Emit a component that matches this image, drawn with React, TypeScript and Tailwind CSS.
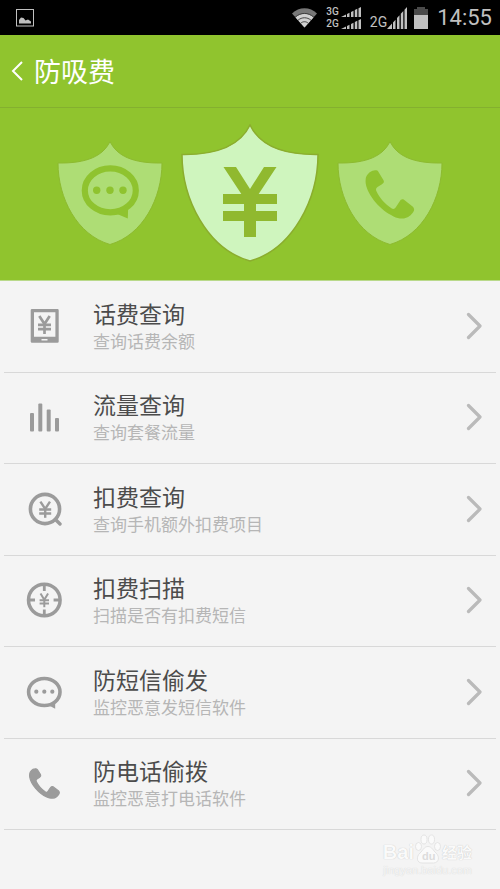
import type { ReactNode } from "react";

type Item = {
  title: string;
  desc: string;
  icon: ReactNode;
};

const PHONE_PATH =
  "M27.7 38 C28 34 32 30 36 29.5 C38 29.2 39.2 29.2 40.2 30.5 L45.4 39 C46.6 41 45.6 42 44 43.2 L39.5 46 C37.8 47.2 37.6 48.6 38.6 50.6 C41.6 57 47 63 53.4 67.2 C55.2 68.4 56.6 68 57.8 66.2 L61.6 60.4 C62.8 58.4 64.2 57.9 66 58.8 L74.6 65.4 C76.4 67 76.6 69 75.4 70.8 C73.4 74 70 77 66 77.4 C62 77.8 59 77 55.6 75.4 C42.6 69.6 29.6 54.6 27.7 42.6 C27.5 41 27.5 39.6 27.7 38 Z";

const SMALL_SHIELD =
  "M52 0.5 C59 15 75 22.5 104 22 C104 57 85 94 52 103.5 C19 94 0 57 0 22 C29 22.5 45 15 52 0.5 Z";

function Yen({ x, y, w, h, stroke }: { x: number; y: number; w: number; h: number; stroke: number }) {
  const cx = x + w / 2;
  const mid = y + h * 0.45;
  return (
    <g fill="none" stroke="currentColor" strokeWidth={stroke}>
      <path d={`M${x + w * 0.1} ${y} L${cx} ${mid} L${x + w * 0.9} ${y}`} />
      <path d={`M${x} ${y + h * 0.49} H${x + w} M${x} ${y + h * 0.73} H${x + w}`} />
      <path d={`M${cx} ${mid} V${y + h}`} />
    </g>
  );
}

function RowIcon({ children }: { children: ReactNode }) {
  return (
    <svg viewBox="0 0 36 36" className="h-9 w-9 shrink-0 text-[#9b9b9b]" fill="currentColor" aria-hidden="true">
      {children}
    </svg>
  );
}

const items: Item[] = [
  {
    title: "话费查询",
    desc: "查询话费余额",
    icon: (
      <RowIcon>
        <path
          fillRule="evenodd"
          d="M6 1 H31.5 Q32.7 1 32.7 2.2 V33.5 Q32.7 34.7 31.5 34.7 H6 Q4.7 34.7 4.7 33.5 V2.2 Q4.7 1 6 1 Z M8 4.3 V28.8 H29.4 V4.3 Z M15.5 31 V32.6 H21.5 V31 Z"
        />
        <Yen x={12} y={8} w={13} h={18} stroke={2.7} />
      </RowIcon>
    ),
  },
  {
    title: "流量查询",
    desc: "查询套餐流量",
    icon: (
      <RowIcon>
        <rect x="4" y="14" width="4" height="18.5" rx="1" />
        <rect x="12.3" y="4.6" width="4" height="27.9" rx="1" />
        <rect x="20.7" y="10.6" width="4" height="21.9" rx="1" />
        <rect x="29" y="19" width="4" height="13.5" rx="1" />
      </RowIcon>
    ),
  },
  {
    title: "扣费查询",
    desc: "查询手机额外扣费项目",
    icon: (
      <RowIcon>
        <circle cx="19" cy="18" r="14.6" fill="none" stroke="currentColor" strokeWidth="3.6" />
        <path d="M29.5 28.5 L34 33" stroke="currentColor" strokeWidth="3.4" strokeLinecap="round" />
        <Yen x={13.2} y={10.6} w={12} h={16.2} stroke={2.4} />
      </RowIcon>
    ),
  },
  {
    title: "扣费扫描",
    desc: "扫描是否有扣费短信",
    icon: (
      <RowIcon>
        <circle cx="18.3" cy="18" r="15.8" fill="none" stroke="currentColor" strokeWidth="3.5" />
        <path
          d="M18.3 2 V9 M18.3 27.5 V34 M2.3 18 H9 M27.6 18 H34.3"
          stroke="currentColor"
          strokeWidth="2.8"
        />
        <Yen x={13.6} y={11.6} w={9.4} h={13.6} stroke={2} />
      </RowIcon>
    ),
  },
  {
    title: "防短信偷发",
    desc: "监控恶意发短信软件",
    icon: (
      <RowIcon>
        <ellipse cx="18.3" cy="18" rx="15.7" ry="13.5" fill="none" stroke="currentColor" strokeWidth="3.6" />
        <path d="M23 31.5 L29.2 34.8 L29.2 28.5 Z" />
        <circle cx="10.3" cy="17.7" r="2.1" />
        <circle cx="18.3" cy="17.7" r="2.1" />
        <circle cx="26.3" cy="17.7" r="2.1" />
      </RowIcon>
    ),
  },
  {
    title: "防电话偷拨",
    desc: "监控恶意打电话软件",
    icon: (
      <RowIcon>
        <g transform="translate(-13.2 -14.1) scale(0.61)">
          <path d={PHONE_PATH} stroke="currentColor" strokeWidth="2" strokeLinejoin="round" />
        </g>
      </RowIcon>
    ),
  },
];

function SignalBars({ className }: { className: string }) {
  return (
    <svg viewBox="0 0 20 20" preserveAspectRatio="none" className={className} fill="currentColor" aria-hidden="true">
      <path d="M0 20 L5 15 V20 Z M6 14 L8.5 11.5 V20 H6 Z M10 10 L12.5 7.5 V20 H10 Z M13.8 6.2 L16.3 3.7 V20 H13.8 Z M17.5 2.5 L20 0 V20 H17.5 Z" />
    </svg>
  );
}

function StatusBar() {
  return (
    <div className="flex h-[35px] items-center bg-black pr-2 pl-4 font-[Roboto,sans-serif] text-[#c0c0c0]">
      <svg viewBox="0 0 18 18" className="h-[18px] w-[18px]" aria-hidden="true">
        <rect x="0.5" y="0.5" width="17" height="16.5" fill="none" stroke="currentColor" />
        <path d="M3 14.5 V11 L5 8.5 L7.5 9 L9.5 11.5 L12 10.5 L15 12.5 V14.5 Z" fill="currentColor" />
      </svg>

      <div className="ml-auto flex items-center">
        <svg viewBox="0 0 25 20" className="h-5 w-[25px]" aria-hidden="true">
          <path d="M12.5 19.5 L0 5.5 C7 -1.5 18 -1.5 25 5.5 Z" fill="#777" />
          <path d="M12.5 19.5 L3.5 9.5 C8.5 4.5 16.5 4.5 21.5 9.5 Z" fill="#d0d0d0" />
          <path
            d="M3.2 9.2 C8.5 4.2 16.5 4.2 21.8 9.2 M6 12.3 C9.8 8.9 15.2 8.9 19 12.3 M8.6 15.3 C11 13.2 14 13.2 16.4 15.3"
            fill="none"
            stroke="#333"
            strokeWidth="0.9"
          />
        </svg>
        <div className="ml-[9px] flex flex-col gap-[2px] text-[10px] leading-[10px] font-medium">
          <div className="flex items-center gap-[2px]">
            <span>3G</span>
            <SignalBars className="h-[10px] w-5" />
          </div>
          <div className="flex items-center gap-[2px]">
            <span>2G</span>
            <SignalBars className="h-[10px] w-5" />
          </div>
        </div>
        <div className="ml-[9px] flex items-end">
          <span className="text-[14px] leading-[14px]">2G</span>
          <SignalBars className="h-[22px] w-5" />
        </div>
        <svg viewBox="0 0 16 22" className="ml-[6px] h-[22px] w-4" aria-hidden="true">
          <path d="M4 0 H12 V2 H15 V8 H1 V2 H4 Z" fill="#4a4a4a" />
          <path d="M1 8 H15 V22 H1 Z" fill="currentColor" />
        </svg>
        <time className="ml-[8px] text-[22px] leading-[26px]">14:55</time>
      </div>
    </div>
  );
}

function Hero() {
  return (
    <section className="flex items-center justify-center gap-[18px] border-b border-[#b9d98a] bg-[#90c42e] pt-[16px] pb-[18px]">
      <svg viewBox="-1 -1 106 106" className="h-[106px] w-[106px]" aria-hidden="true">
        <path d={SMALL_SHIELD} fill="#aedd75" stroke="#8dba30" strokeWidth="1" />
        <g fill="#8fc32f">
          <ellipse cx="52.3" cy="49.4" rx="25.5" ry="22" fill="none" stroke="#8fc32f" strokeWidth="6.2" />
          <path d="M58 72.5 L69.8 77.5 L70.2 65 Z" />
          <circle cx="38.7" cy="49.2" r="3.7" />
          <circle cx="52" cy="49.2" r="3.7" />
          <circle cx="65" cy="49.2" r="3.7" />
        </g>
      </svg>

      <svg viewBox="-1 -1 138 138" className="h-[138px] w-[138px] text-[#90b92f]" aria-hidden="true">
        <path
          d="M68 0 C77 19 97 30 136 29.5 C136 74 111 124 68 136 C25 124 0 74 0 29.5 C39 30 59 19 68 0 Z"
          fill="#cff5be"
          stroke="#8bad2e"
          strokeWidth="1.5"
        />
        <g fill="currentColor">
          <path d="M41.5 42 H54 L68 64 L82 42 H94.5 L76 70 H60 Z" />
          <rect x="41" y="69" width="54" height="10" />
          <rect x="41" y="86" width="54" height="10" />
          <rect x="62" y="69" width="12" height="43" />
        </g>
      </svg>

      <svg viewBox="-1 -1 106 106" className="h-[106px] w-[106px]" aria-hidden="true">
        <path d={SMALL_SHIELD} fill="#aedd75" stroke="#8dba30" strokeWidth="1" />
        <path d={PHONE_PATH} fill="#8fc32f" />
      </svg>
    </section>
  );
}

function Watermark() {
  return (
    <div className="flex flex-col items-end pt-1 pr-[28px] text-[#fafafa] [text-shadow:0_0_1px_#bbb]">
      <div className="flex items-end">
        <span className="font-[Liberation_Sans,sans-serif] text-[20px] leading-[24px] font-bold">Bai</span>
        <svg viewBox="0 0 28 30" className="h-[30px] w-7" fill="#fafafa" stroke="#dedede" strokeWidth="0.8" aria-hidden="true">
          <ellipse cx="4.5" cy="12.5" rx="3" ry="4" />
          <ellipse cx="10" cy="5.5" rx="3" ry="4.5" />
          <ellipse cx="17.5" cy="5.5" rx="3" ry="4.5" />
          <ellipse cx="23.5" cy="12.5" rx="3" ry="4" />
          <path d="M14 12.5 C18 12.5 19 16.5 22 19 C26 22.5 25 29 19.5 29 H8 C2.5 29 2 22.5 6 19 C9 16.5 10 12.5 14 12.5 Z" />
          <text
            x="8"
            y="26"
            className="font-[Liberation_Sans,sans-serif] text-[11px] font-bold [text-shadow:none]"
            fill="#dcdcdc"
            stroke="none"
          >
            du
          </text>
        </svg>
        <span className="text-[15px] leading-[24px] font-bold">经验</span>
      </div>
      <span className="font-[Liberation_Sans,sans-serif] text-[11px] leading-[12px] text-[#f6f6f6] [text-shadow:0_0_1px_#ccc]">
        jingyan.baidu.com
      </span>
    </div>
  );
}

export default function App() {
  return (
    <div className="min-h-screen bg-[#f4f4f4] font-[Noto_Sans_CJK_SC,sans-serif]">
      <StatusBar />

      <header className="flex h-[73px] items-center border-b border-[#84b02f] bg-[#90c42e] pl-[11px] text-white">
        <button type="button" className="flex items-center gap-[11px]">
          <svg viewBox="0 0 12 20" className="h-5 w-3" fill="none" stroke="currentColor" strokeWidth="2" aria-hidden="true">
            <path d="M11 1 L2 10 L11 19" />
          </svg>
          <h1 className="text-[27px] leading-[36px]">防吸费</h1>
        </button>
      </header>

      <Hero />

      <ul className="grid min-h-[549px] auto-rows-fr px-1">
        {items.map((item) => (
          <li key={item.title} className="border-b border-[#d8d8d8]">
            <a href="#" className="flex h-full items-center pr-[14px] pb-px pl-[22px]">
              {item.icon}
              <div className="ml-[31px] flex-1">
                <div className="text-[23px] leading-[30px] text-[#4c4c4c]">{item.title}</div>
                <div className="text-[17px] leading-[26px] text-[#b6b6b6]">{item.desc}</div>
              </div>
              <svg
                viewBox="0 0 16 28"
                className="h-7 w-4"
                fill="none"
                stroke="#bababa"
                strokeWidth="3.2"
                strokeLinecap="round"
                strokeLinejoin="round"
                aria-hidden="true"
              >
                <path d="M2.5 2.5 L14 14 L2.5 25.5" />
              </svg>
            </a>
          </li>
        ))}
      </ul>

      <Watermark />
    </div>
  );
}
